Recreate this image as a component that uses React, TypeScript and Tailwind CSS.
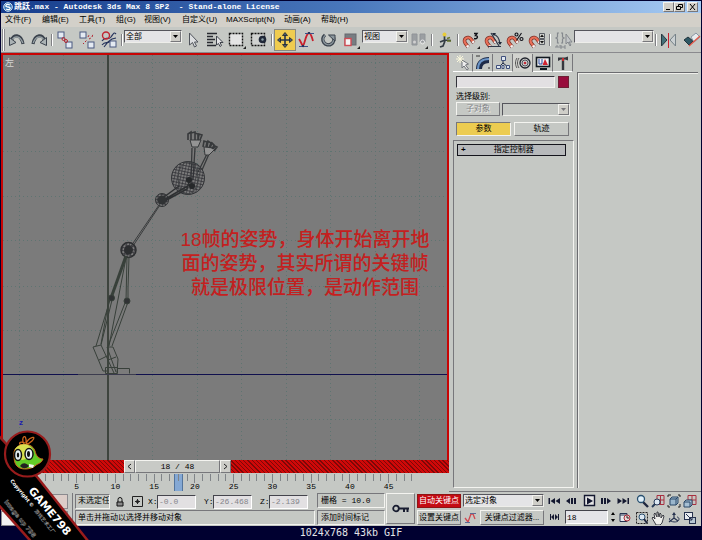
import { useState } from 'react';
import type { ReactNode } from 'react';
import clsx from 'clsx';

const RAISED = 'border border-t-[#f4f4f0] border-l-[#f4f4f0] border-b-[#77777b] border-r-[#77777b]';
const SUNKEN = 'border border-t-[#77777b] border-l-[#77777b] border-b-[#f4f4f0] border-r-[#f4f4f0]';

const MENUS = [
    { label: '文件(F)', width: 'w-[37px]' },
    { label: '编辑(E)', width: 'w-[37px]' },
    { label: '工具(T)', width: 'w-[37px]' },
    { label: '组(G)', width: 'w-[28px]' },
    { label: '视图(V)', width: 'w-[38px]' },
    { label: '自定义(U)', width: 'w-[44px]' },
    { label: 'MAXScript(N)', width: 'w-[58px]' },
    { label: '动画(A)', width: 'w-[37px]' },
    { label: '帮助(H)', width: 'w-[37px]' },
];

function Icon({ size = 22, children }: { size?: number; children: ReactNode }) {
    return (
        <svg width={size} height={size} viewBox={`0 0 ${size} ${size}`} fill="none" className="block shrink-0" aria-hidden="true">
            {children}
        </svg>
    );
}

function ToolButton({ label, active, children }: { label: string; active?: boolean; children: ReactNode }) {
    return (
        <button
            aria-label={label}
            className={clsx('flex h-[22px] w-[22px] shrink-0 items-center justify-center overflow-hidden', active && 'border border-[#8a8a80] bg-[#f0cc50]')}
        >
            <Icon>{children}</Icon>
        </button>
    );
}

function Separator() {
    return <span className="mx-px h-3 w-[2px] shrink-0 border-l border-[#808084] border-r border-r-white" />;
}

function Dropdown({ label, value, disabled, className }: { label: string; value: string; disabled?: boolean; className: string }) {
    return (
        <div className={clsx('relative shrink-0', className)}>
            <select
                aria-label={label}
                disabled={disabled}
                className={clsx(
                    'block h-[13px] w-full appearance-none border border-t-[#55555c] border-l-[#55555c] border-b-[#eeeeea] border-r-[#eeeeea] pl-px text-[8px] leading-[11px]',
                    disabled ? 'bg-[#c5c8c4]' : 'bg-[#e4e4e6] text-black',
                )}
            >
                <option>{value}</option>
            </select>
            <span className={clsx('pointer-events-none absolute top-px right-px flex h-[11px] w-[11px] items-center justify-center bg-[#cfcec8]', RAISED)}>
                <svg width="5" height="3" viewBox="0 0 5 3"><path d="M0 0h5L2.5 3z" fill={disabled ? '#77777b' : '#000'} /></svg>
            </span>
        </div>
    );
}

const Magnet = () => (
    <g transform="rotate(-38 8 12)">
        <path d="M4.500 17v-5a3.500 3.500 0 0 1 7 0v5" stroke="#7c3028" strokeWidth="3.600" />
        <path d="M4.500 16v-4a3.500 3.500 0 0 1 7 0v4" stroke="#ea7058" strokeWidth="2.200" />
        <path d="M3.200 16h2.600M10.200 16h2.600" stroke="#f4f4f4" strokeWidth="2" />
    </g>
);

const Sheet = ({ x, y }: { x: number; y: number }) => (
    <rect x={x} y={y} width="6" height="6" fill="#e4eaf2" stroke="#4a5880" />
);

function Toolbar() {
    return (
        <div className="flex h-[26px] items-center overflow-hidden border-b border-[#8a8a8e] bg-[#c5c8c4]">
            <span className="mx-px h-[22px] w-[3px] shrink-0 border-l border-r border-[#8c8c90] bg-white" />
            <ToolButton label="Undo">
                <path d="M5.500 11.500C7 5 15 4.500 17 15" stroke="#3a424c" strokeWidth="3.200" />
                <path d="M6 11.500C8 6.500 14 6 16.800 14" stroke="#9aa4a8" strokeWidth="1.400" />
                <path d="M3.500 8.500v8l6.500-3z" fill="#aab2b4" stroke="#3a424c" />
            </ToolButton>
            <ToolButton label="Redo">
                <path d="M5 15C7 4.500 15 5 16.500 11.500" stroke="#3a424c" strokeWidth="3.200" />
                <path d="M5.200 14C8 6 14 6.500 16 11.500" stroke="#9aa4a8" strokeWidth="1.400" />
                <path d="M18.500 8.500v8l-6.500-3z" fill="#aab2b4" stroke="#3a424c" />
            </ToolButton>
            <Separator />
            <ToolButton label="Link">
                <Sheet x={4} y={3} /><Sheet x={12} y={13} />
                <circle cx="9.500" cy="10" r="1.500" stroke="#b42430" /><circle cx="12" cy="12" r="1.500" stroke="#b42430" />
            </ToolButton>
            <ToolButton label="Unlink">
                <Sheet x={4} y={3} /><Sheet x={12} y={13} />
                <path d="M9 13l2-2M7 15l1-1M13 10l2-1M16 8l1-3M12 8l1-2" stroke="#b42430" strokeDasharray="2 1" />
            </ToolButton>
            <ToolButton label="Bind to space warp">
                <path d="M4 12c4-6 6 0 9-4s3-5 5-3M4 16c4-5 6 0 8-4M6 18l4-5 4-3 4-1" stroke="#26345c" strokeWidth="1.200" />
                <circle cx="8" cy="6.500" r="3.500" stroke="#c02430" strokeWidth="1.400" />
                <Sheet x={12} y={12} />
            </ToolButton>
            <Separator />
            <Dropdown label="Selection filter" value="全部" className="w-[58px] self-start mt-[3px]" />
            <ToolButton label="Select">
                <path d="M7.500 4v12l3-2.500 2 4.500 2-1-2-4h3.500z" fill="#dcdee0" stroke="#50545c" />
            </ToolButton>
            <ToolButton label="Select by name">
                <path d="M3 4.500h10M3 7.500h6M3 10.500h8M3 13.500h6M3 16.500h9" stroke="#282a30" strokeWidth="1.500" />
                <path d="M12.500 7v9l2-1.500 1.500 3 1.500-1-1.500-3h3z" fill="#e4e4e6" stroke="#40444c" />
            </ToolButton>
            <ToolButton label="Rectangular region">
                <rect x="3.500" y="4.500" width="13" height="12" fill="#e4e4e4" stroke="#111" strokeDasharray="2 1" strokeWidth="1.400" />
                <path d="M20 17v3h-3z" fill="#222" />
            </ToolButton>
            <ToolButton label="Window crossing">
                <rect x="3.500" y="4.500" width="13" height="12" fill="#d0d2d0" stroke="#111" strokeDasharray="2 1" strokeWidth="1.400" />
                <circle cx="14.500" cy="10.500" r="3.800" fill="#202838" />
                <circle cx="14.500" cy="10.500" r="1.200" fill="#8ba0a8" />
            </ToolButton>
            <Separator />
            <ToolButton label="Move" active>
                <path d="M11 5v12M5 11h12" stroke="#26344c" strokeWidth="1.600" />
                <path d="M11 3.500l2.500 3h-5zM11 18.500l2.500-3h-5zM3.500 11l3-2.500v5zM18.500 11l-3-2.500v5z" fill="#4a5a70" stroke="#1c2430" strokeWidth=".8" />
            </ToolButton>
            <ToolButton label="Curve editor">
                <path d="M3 10c2 3 3 6 4 7 2-3 3-13 6-13 2 0 3 5 4 8" stroke="#c8202c" strokeWidth="1.800" />
                <path d="M3 17.500h9M9 4.500h9" stroke="#3c5288" />
                <path d="M6 16h2v2H6zM12 3h2v2h-2z" fill="#26345c" />
            </ToolButton>
            <ToolButton label="Rotate">
                <path d="M7 6a5.500 5.500 0 1 0 8 1.500" stroke="#3a424c" strokeWidth="3.400" />
                <path d="M7 6.500a5.200 5.200 0 1 0 8 1.500" stroke="#8b969c" strokeWidth="1.400" />
                <path d="M10.500 6h6.500v6z" fill="#8b969c" stroke="#3a424c" />
            </ToolButton>
            <ToolButton label="Scale">
                <rect x="5" y="5" width="11" height="11" fill="#777d82" stroke="#66686e" />
                <rect x="5" y="9.500" width="6" height="7" fill="#f4f4f4" stroke="#d04c54" strokeWidth="1.400" />
                <path d="M20 17v3h-3z" fill="#222" />
            </ToolButton>
            <Dropdown label="Coordinate system" value="视图" className="w-[46px] self-start mt-[3px]" />
            <ToolButton label="Pivot centre">
                <path d="M4 5h5v11H4zM12 5h5v8h-5z" fill="#9b9fa2" stroke="#909498" />
                <circle cx="6.500" cy="13" r="1.500" fill="#d0d0d0" /><circle cx="14.500" cy="13" r="2" stroke="#e8e8e8" />
                <path d="M20 17v3h-3z" fill="#222" />
            </ToolButton>
            <Separator />
            <ToolButton label="Manipulate">
                <path d="M10.500 6v7M6 13l5-2 6 .5M11 12l-2 5-3 1" stroke="#333c44" strokeWidth="1.700" />
                <circle cx="10.500" cy="5.500" r="2" fill="#e8cc38" />
                <path d="M13 9.500l3-1M13 12h4" stroke="#65742c" strokeWidth="1.400" />
            </ToolButton>
            <Separator />
            <ToolButton label="Snap 3D">
                <Magnet />
                <path d="M14 4.500h3l-1.500 2c3 0 2.500 4-1.500 3" stroke="#101018" strokeWidth="1.400" />
                <path d="M20 17v3h-3z" fill="#222" />
            </ToolButton>
            <ToolButton label="Angle snap">
                <Magnet />
                <path d="M19 17.500H6M17 17L9 4M11 5c4 1 6.500 5 7 10" stroke="#303848" strokeWidth="1.200" />
                <path d="M10 4h4l-2 3zM16 13h4l-2 3z" fill="#202838" />
            </ToolButton>
            <ToolButton label="Percent snap">
                <Magnet />
                <circle cx="12.500" cy="5.500" r="1.500" stroke="#101018" strokeWidth="1.100" /><circle cx="17.500" cy="10" r="1.500" stroke="#101018" strokeWidth="1.100" /><path d="M17.500 4l-5 7.500" stroke="#101018" strokeWidth="1.100" />
            </ToolButton>
            <ToolButton label="Spinner snap">
                <Magnet />
                <path d="M13.500 4.500h5v5h-5zM13.500 10.500h5v5h-5z" fill="#d0d2ce" stroke="#5a5e64" />
                <path d="M16 5.500l2 2.500h-4zM16 14.500l2-2.500h-4z" fill="#111" />
            </ToolButton>
            <Separator />
            <ToolButton label="Named selection sets">
                <path d="M7 4H5.500v4L4 9l1.500 1v4H7M9 4h1.500v4l1.500 1-1.500 1v4H9" stroke="#85898e" strokeWidth="1.200" />
                <path d="M14 5v10l2-2 2 4 1-1-2-3h3z" fill="#c2c5c7" stroke="#85898e" />
                <path d="M4 19v-2h2v2M8 16v3h2v-2H8M14 17h-2v2h2" stroke="#85898e" />
            </ToolButton>
            <Dropdown label="Named selection" value="" className="w-[80px] self-start mt-[3px]" />
            <Separator />
            <ToolButton label="Mirror">
                <path d="M3.500 5v12l5.500-6z" fill="#447078" stroke="#283840" />
                <path d="M17.500 5v12L12 11z" fill="#cad0d2" stroke="#768288" />
                <path d="M10.500 4v15" stroke="#c82430" />
            </ToolButton>
            <ToolButton label="Align">
                <path d="M4 11l4-3 5 4-4 4z" fill="#2e5864" stroke="#20343c" />
                <path d="M11 8l5-4 4 4-6 5z" fill="#e8ebed" stroke="#8a96a4" />
                <path d="M9 17L20 7" stroke="#e05648" strokeWidth="1.300" />
            </ToolButton>
        </div>
    );
}

const GRID_X = [19, 63, 152, 197, 241, 286, 330, 375, 419];
const GRID_Y = [62, 107, 151, 196, 240, 286, 330, 419];

function Rig() {
    return (
        <svg className="absolute inset-0 h-full w-full" aria-hidden="true">
            <defs>
                <pattern id="mesh" width="3" height="3" patternUnits="userSpaceOnUse" patternTransform="rotate(12)">
                    <path d="M0 0h3M0 0v3" stroke="#2e2e34" strokeWidth="1.300" />
                </pattern>
            </defs>
            <g transform="translate(-3 -55)" fill="none">
                <g stroke="#5e7471" strokeDasharray="1 3">
                    {GRID_X.map(x => <path key={x} d={`M${x}.500 55v2000`} />)}
                    {GRID_Y.map(y => <path key={y} d={`M3 ${y}.500h2000`} />)}
                </g>
                <path d="M108 55v2000" stroke="#3e443e" strokeWidth="2" />
                <path d="M3 374.500h2000" stroke="#10104e" />
                <path d="M78 374.500h58" stroke="#3c3c4e" />

                {/* arms and hands */}
                <g stroke="#37393b">
                    <path d="M191 180l1-32M193 180l2-32M198 172l9-18M202 170l7-16" strokeWidth="1.300" />
                    <path d="M190 140l2 7h6l3-7zM204 147l1 8h4l7-7z" fill="#949494" />
                    <path d="M188 140v-6l3-2v8M191 140v-7l4-1v8M195 140v-7l3 1v6M198 140l1-6 3 1-2 5" strokeWidth="1.600" />
                    <path d="M203 147l1-6 3 1-1 5M207 147l1-6 3 2-2 5M210 148l2-5 2 2-2 4M213 149l2-3 2 1-3 4" strokeWidth="1.600" />
                </g>

                {/* head and spine */}
                <circle cx="188" cy="178" r="16.500" fill="url(#mesh)" stroke="#333538" />
                <ellipse cx="188" cy="178" rx="10" ry="16" stroke="#414345" />
                <path d="M190 179l-3 10-24 13M191 184l-29 17M179 186l-15 11" stroke="#2e3032" strokeWidth="1.500" />
                <circle cx="189" cy="180" r="3" fill="#26282a" /><circle cx="192" cy="186" r="3" fill="#26282a" />
                <circle cx="162" cy="200" r="6.500" fill="url(#mesh)" stroke="#303234" />
                <circle cx="162" cy="200" r="4.500" fill="#303234" />
                <path d="M159 205l-28 41M160 205l-27 41" stroke="#3a3c3d" />
                <circle cx="128.500" cy="250" r="7.500" fill="url(#mesh)" stroke="#2c2e30" strokeWidth="1.500" />
                <circle cx="128.500" cy="250" r="4.500" fill="#2c2e30" />

                {/* legs and feet */}
                <g stroke="#38403a">
                    <path d="M126 256l-15 42" strokeWidth="3" />
                    <path d="M127 256l-1 45M129 257l-1 31v12M126 258l-17 88M110 300l-14 46M112 300l-11 45M109 300l-8 44M125 303l-17 43M128 302l-16 44" />
                    <circle cx="111.500" cy="298" r="3" fill="#303234" /><circle cx="127" cy="301" r="3" fill="#303234" />
                    <path d="M93 347l8-2 13 28M93 347l10 24h4M99 360l8-4M107 347h6l5 12-1 14M107 347l9 25M108 360l8-3" />
                    <path d="M105.500 367.500h12v6h-12zM117.500 368.500h12v5" />
                </g>
            </g>
        </svg>
    );
}

function Viewport() {
    return (
        <div className="relative flex-1 overflow-hidden border-2 border-[#c80404] bg-[#7b7b7b] border-b-0">
            <Rig />
            <span className="absolute top-[3px] left-[2px] text-[9px] leading-[10px] text-[#d4d4d4]">左</span>
            <span className="absolute bottom-[32px] left-[16px] text-[8px] font-bold leading-[10px] text-[#1c1cb0]">z</span>
            <p className="absolute top-[173px] left-[174px] w-[256px] text-center text-[19px] font-medium leading-[24px] text-[#c42020]">
                18帧的姿势，身体开始离开地<br />面的姿势，其实所谓的关键帧<br />就是极限位置，是动作范围
            </p>
        </div>
    );
}

function TrackBar() {
    const frames = Array.from({ length: 49 }, (_, i) => i);
    return (
        <div>
            <div className="flex h-[13px] bg-[#be0c0c] bg-[repeating-linear-gradient(45deg,#7c0808_0_1px,#d00808_1px_3px)] pl-[123px]">
                <button aria-label="Previous frame" className={clsx('flex w-[11px] items-center justify-center bg-[#cdcdc8]', RAISED)}>
                    <svg width="5" height="7" viewBox="0 0 5 7"><path d="M4 1L1 3.500 4 6" fill="none" stroke="#222" /></svg>
                </button>
                <button className={clsx('w-[85px] bg-[#c8cac6] text-center font-[Liberation_Mono] text-[8px] leading-[11px]', RAISED)}>18 / 48</button>
                <button aria-label="Next frame" className={clsx('flex w-[11px] items-center justify-center bg-[#cdcdc8]', RAISED)}>
                    <svg width="5" height="7" viewBox="0 0 5 7"><path d="M1 1l3 2.500L1 6" fill="none" stroke="#222" /></svg>
                </button>
            </div>
            <div className="flex h-[19px] items-start pt-px pr-[33px] pl-[33px]">
                {frames.map(f => (
                    <div key={f} className={clsx('flex h-[17px] w-0 flex-1 flex-col items-center', f === 18 && 'border-x border-[#53749c] bg-[#84a8d4]')}>
                        <span className={clsx('w-px shrink-0 bg-[#808488]', f % 5 === 0 ? 'h-[9px]' : 'h-[7px]')} />
                        {f > 0 && f % 5 === 0 && <span className="font-[Liberation_Mono] text-[8px] leading-[8px]">{f}</span>}
                    </div>
                ))}
            </div>
        </div>
    );
}

const TABS = [
    { name: 'Create', icon: <><path d="M8 6v8l2-2 3 4 1.500-1-3-4 3-1z" fill="#eee" stroke="#70747a" /><path d="M6 1v8M2 5h8M3 2l6 6M9 2L3 8" stroke="#fbf8dc" /></> },
    { name: 'Modify', icon: <><path d="M5 15C5 9 9 6 15 6" stroke="#1d2b48" strokeWidth="6" /><path d="M4 15C4 8 8 5 15 5" stroke="#6c96c8" strokeWidth="2" /><path d="M2 2h4M14 14h2" stroke="#333" /></> },
    { name: 'Hierarchy', icon: <><path d="M9 6v4M9 9l-4 4M9 9l5 4" stroke="#222c48" /><path d="M7.500 2.500h4v4h-4zM2.500 11.500h4v3h-4zM12.500 11.500h3v3h-3zM8 11.500h2v3H8z" fill="#e0e8f0" stroke="#40507c" /></> },
    { name: 'Motion', icon: <><circle cx="11" cy="9" r="5" fill="#ccc" stroke="#20242c" strokeWidth="1.300" /><circle cx="11" cy="9" r="3" stroke="#50545c" /><circle cx="11" cy="9" r="1.300" fill="#c02c38" /><path d="M5 4C3 7 3 11 5 14M3 4C1 7 1 11 3 14" stroke="#555" /></> },
    { name: 'Display', icon: <><rect x="2.500" y="3.500" width="13" height="9" fill="#f0f2f4" stroke="#111820" strokeWidth="1.600" /><path d="M5 5v5h3V5" stroke="#2848a0" /><path d="M8.500 11l2.500-6 3 6z" fill="#d02430" /><path d="M6 15h7" stroke="#111820" strokeWidth="2" /></> },
    { name: 'Utilities', icon: <><path d="M4 7V3.500h7l3-1v4l-3-1H7z" fill="#36383e" /><path d="M9 5v11" stroke="#36383e" strokeWidth="2.400" /><path d="M9 4v3" stroke="#c82c30" strokeWidth="2" /></> },
];

function CommandPanel() {
    const [mode, setMode] = useState('参数');
    return (
        <aside className="flex w-[252px] shrink-0 flex-col border-b border-[#77777b] pb-[3px] pl-[4px]">
            <div className="flex h-[19px] items-end">
                {TABS.map(tab => (
                    <button
                        key={tab.name}
                        aria-label={tab.name}
                        className={clsx('flex h-[18px] w-[20px] items-center justify-center border-r border-[#77777b]', tab.name === 'Motion' ? 'bg-[#d2d3cf]' : 'border-b border-b-white')}
                    >
                        <Icon size={18}>{tab.icon}</Icon>
                    </button>
                ))}
            </div>
            <div className="flex flex-1">
                <div className="flex w-[121px] flex-col">
                    <div className="px-[3px]">
                        <div className="mt-[4px] flex gap-[3px]">
                            <input aria-label="Object name" className="h-[12px] w-[99px] border border-t-[#33333a] border-l-[#33333a] border-[#f2f2ee] bg-[#e2e0e2] text-[8px]" />
                            <button aria-label="Object colour" className="h-[12px] w-[11px] border border-[#6c2034] bg-[#980c3c]" />
                        </div>
                        <div className="mt-[4px] text-[8px] leading-[10px]">选择级别:</div>
                        <div className="flex items-center gap-[2px]">
                            <button disabled className={clsx('h-[14px] w-[44px] text-[8px] leading-[12px] text-[#85878a] [text-shadow:1px_1px_#eee]', RAISED)}>子对象</button>
                            <Dropdown label="选择级别" value="" disabled className="w-[68px]" />
                        </div>
                        <div className="mt-[6px] flex gap-[3px]">
                            {['参数', '轨迹'].map(m => (
                                <button
                                    key={m}
                                    onClick={() => setMode(m)}
                                    className={clsx('h-[14px] w-[55px] text-[8px] leading-[12px]', mode === m ? 'bg-[#eccc50]' : '', mode === m ? SUNKEN : RAISED)}
                                >
                                    {m}
                                </button>
                            ))}
                        </div>
                    </div>
                    <div className={clsx('mt-[4px] flex-1 px-[3px] pt-[3px]', SUNKEN)}>
                        <button className="flex h-[12px] w-[109px] items-center border border-[#14141c] bg-[#b7b9bb] px-[3px] text-[8px] leading-[10px]">
                            <span className="font-bold">+</span>
                            <span className="flex-1">指定控制器</span>
                        </button>
                    </div>
                </div>
                <div className="ml-[3px] mr-[3px] flex-1 border-t border-l border-[#6c6c70] shadow-[inset_1px_1px_#eeeeea]" />
            </div>
        </aside>
    );
}

function Coord({ axis, value }: { axis: string; value: string }) {
    return (
        <label className="flex items-center font-[Liberation_Mono] text-[8px] leading-[10px]">
            <span className="w-[9px]">{axis}:</span>
            <input defaultValue={value} className="h-[14px] w-[39px] border border-t-[#44444c] border-l-[#44444c] border-b-white border-r-white bg-[#e2e0e2] pl-px text-[#85858a]" />
        </label>
    );
}

const TRANSPORT = [
    { name: 'Go to start', d: 'M1.500 4H3v6H1.500zM8 4v6L3.500 7zM13 4v6L8.500 7z' },
    { name: 'Previous', d: 'M2 7l4-3v6zM7 4h2v6H7zM10 4h2v6h-2z' },
    { name: 'Play', d: 'M5 3.500v7L11 7z' },
    { name: 'Next', d: 'M12 7L8 4v6zM5 4h2v6H5zM2 4h2v6H2z' },
    { name: 'Go to end', d: 'M1.500 4v6L6 7zM6.500 4v6L11 7zM11.500 4H13v6h-1.500z' },
];

const NAV = [
    { name: 'Zoom', icon: <><path d="M8 8l5 5" stroke="#202840" strokeWidth="2.400" /><circle cx="6" cy="5" r="3.500" fill="#e0f0fa" stroke="#285070" strokeWidth="1.300" /></> },
    { name: 'Zoom all', icon: <><path d="M6 1.500h7v9H6zM6 6h7M9.500 1v10" stroke="#a83040" /><circle cx="6" cy="8" r="3" fill="#dce8f2" stroke="#263a58" /><path d="M4 10l-3 3" stroke="#263a58" strokeWidth="2" /></> },
    { name: 'Zoom extents', icon: <><path d="M1 3V1h3M11 1h2v2M1 11v2h2M13 10v3h-2" stroke="#222" /><path d="M3 5l2-2h6v6l-2 2H3zM3 5h6v6M9 5l2-2" fill="#9ab6cc" stroke="#2b4868" /></> },
    { name: 'Zoom extents all', icon: <><path d="M5 1.500h8v9H5zM5 6h8M9 1v10" stroke="#a83040" /><path d="M1 8l2-2h6v5l-2 2H1zM1 8h6v5" fill="#a6c0d4" stroke="#2b4868" /></> },
    { name: 'Zoom region', icon: <><rect x="1.500" y="1.500" width="11" height="11" stroke="#222" strokeDasharray="2 1" /><circle cx="7" cy="6" r="3" fill="#dce8f2" stroke="#285070" /><path d="M9 8l3 4" stroke="#202840" strokeWidth="2" /></> },
    { name: 'Pan', icon: <path d="M4 12L1 7l1-1 2 2-1-5 1-1 2 4V1h1l1 5 1-4 1 1v4l2-3 1 1-2 7-2 2H5z" fill="#f0f0ec" stroke="#2a2c34" strokeWidth=".9" /> },
    { name: 'Arc rotate', icon: <><path d="M7 3v4L2 11M7 7l4 3" stroke="#26324e" strokeWidth="1.200" /><path d="M3 7c-3 4 9 6 9 1 0-1-1-2-2-2" stroke="#26324e" /><path d="M5 4l2-3 2 3z" fill="#26324e" /></> },
    { name: 'Maximise viewport', icon: <><rect x="1.500" y="1.500" width="8" height="7" fill="#e8ecf0" stroke="#26324e" /><rect x="6.500" y="6.500" width="6" height="6" fill="#b8c8d4" stroke="#26324e" /><path d="M3 3l6 6M9 6v3H6" stroke="#26324e" /></> },
];

function StatusBar() {
    return (
        <div className="flex h-[34px] overflow-hidden bg-[#c5c8c4] pt-px text-[8px] leading-[12px]">
            <div className="flex w-[67px] shrink-0 flex-col gap-[2px] pt-px">
                <div className="h-[15px] border border-[#8a8a8e] bg-[#dccdc8]" />
                <div className="h-[15px] border border-[#8a8a8e] bg-[#f2f2f2]" />
            </div>
            <div className="ml-[4px] flex min-w-0 flex-1 flex-col border-l border-[#77777b] pl-[2px]">
                <div className="flex h-[17px] items-center">
                    <span className={clsx('h-[15px] w-[35px] shrink-0 overflow-hidden pl-[2px] whitespace-nowrap', SUNKEN)}>未选定任</span>
                    <button aria-label="Lock selection" className="ml-[3px] flex w-[14px] justify-center">
                        <svg width="8" height="10" viewBox="0 0 8 10"><path d="M2 5V2.500a2 2 0 0 1 4 0V5" fill="none" stroke="#111" /><path d="M1 5h6v4H1z" fill="#888" stroke="#111" /></svg>
                    </button>
                    <button aria-label="Absolute mode" className="mr-[5px] ml-[5px]">
                        <svg width="11" height="11" viewBox="0 0 11 11"><path d="M.5.5h10v10H.5z" fill="none" stroke="#222" /><circle cx="5.500" cy="5.500" r="1.500" /><path d="M5.500 3v5M3 5.500h5" stroke="#222" /></svg>
                    </button>
                    <div className="flex gap-[8px]">
                        <Coord axis="X" value="-0.0" />
                        <Coord axis="Y" value="-26.468" />
                        <Coord axis="Z" value="-2.139" />
                    </div>
                </div>
                <div className={clsx('h-[15px] pl-[2px] leading-[13px]', SUNKEN)}>单击并拖动以选择并移动对象</div>
            </div>
            <div className="ml-[2px] flex w-[68px] shrink-0 flex-col gap-[2px]">
                <span className={clsx('h-[15px] pl-[3px] font-[Liberation_Mono,Noto_Sans_CJK_SC] leading-[13px] whitespace-nowrap', SUNKEN)}>栅格 = 10.0</span>
                <span className={clsx('h-[15px] pl-[3px] leading-[13px] whitespace-nowrap', SUNKEN)}>添加时间标记</span>
            </div>
            <button aria-label="Set keys" className={clsx('ml-px flex h-[31px] w-[29px] shrink-0 items-center justify-center', RAISED)}>
                <svg width="18" height="9" viewBox="0 0 18 9" fill="none"><circle cx="4" cy="4.500" r="2.800" stroke="#181c30" strokeWidth="1.800" /><path d="M7 4.500h10M12 5v3M15.500 5v3" stroke="#181c30" strokeWidth="2" /></svg>
            </button>
            <div className="ml-[2px] flex w-[44px] shrink-0 flex-col gap-[2px] pt-px">
                <button className="h-[14px] border border-[#901414] bg-[#c40c14] whitespace-nowrap text-white">自动关键点</button>
                <button className={clsx('h-[15px] whitespace-nowrap', RAISED)}>设置关键点</button>
            </div>
            <div className="ml-[2px] flex w-[82px] shrink-0 flex-col gap-[3px] pt-px">
                <Dropdown label="Key target" value="选定对象" className="w-[81px]" />
                <div className="flex items-center gap-[2px]">
                    <button aria-label="Tangent type" className="w-[15px]">
                        <svg width="15" height="14" viewBox="0 0 15 14" fill="none"><path d="M2 7l3 4 3-8h2l2 5" stroke="#d04850" strokeWidth="1.300" /><path d="M2 11.500h5M7 2.500h6" stroke="#5a6a94" /></svg>
                    </button>
                    <button className={clsx('h-[15px] w-[64px] whitespace-nowrap', RAISED)}>关键点过滤器...</button>
                </div>
            </div>
            <div className="ml-[2px] flex w-[84px] shrink-0 flex-col">
                <div className="flex h-[16px] items-center justify-between">
                    {TRANSPORT.map(t => (
                        <button key={t.name} aria-label={t.name}>
                            <svg width="15" height="14" viewBox="0 0 15 14">
                                {t.name === 'Play' && <path d="M2.500 1.500h10v10h-10z" fill="#e6e6e6" stroke="#141830" strokeWidth="1.400" />}
                                <path d={t.d} fill="#141830" />
                            </svg>
                        </button>
                    ))}
                </div>
                <div className="flex h-[16px] items-center">
                    <button aria-label="Key mode">
                        <svg width="15" height="14" viewBox="0 0 15 14"><path d="M3 4h1v6H3zM7 4v6L4 7zM8 4v6l3-3zM11 4h1v6h-1z" fill="#141830" /></svg>
                    </button>
                    <input aria-label="Current frame" defaultValue="18" className="ml-[3px] h-[14px] w-[43px] border border-t-[#44444c] border-l-[#44444c] border-b-white border-r-white bg-[#e4e4e8] pl-px font-[Liberation_Mono]" />
                    <svg className="ml-[2px]" width="6" height="12" viewBox="0 0 6 12"><path d="M3 1l2 3H1zM3 11l2-3H1z" /></svg>
                    <button aria-label="Time configuration" className="ml-[3px]">
                        <svg width="12" height="12" viewBox="0 0 12 12" fill="none"><path d="M1 2.500h7v8H1zM1 4h7" fill="#e8ecf0" stroke="#26324e" /><circle cx="8" cy="7" r="3" fill="#eed8d8" stroke="#a82c38" /><path d="M8 5v2h2" stroke="#222" /></svg>
                    </button>
                </div>
            </div>
            <div className="mr-[3px] ml-[3px] grid w-[64px] shrink-0 grid-cols-4 grid-rows-2 place-items-center">
                {NAV.map(n => (
                    <button key={n.name} aria-label={n.name}>
                        <Icon size={14}>{n.icon}</Icon>
                    </button>
                ))}
            </div>
        </div>
    );
}

function Watermark() {
    return (
        <svg className="pointer-events-none absolute bottom-0 left-0" width="92" height="112" viewBox="0 0 92 112">
            <path d="M-4 5L38 50L92 118H35L-4 74z" fill="#000" stroke="#981c1c" strokeWidth="2.500" />
            <circle cx="27.500" cy="26" r="22.500" fill="#000" stroke="#981c1c" strokeWidth="2.200" />
            <path d="M24 18c-6-1-6-6 1-3M24 16c-4-7 3-12 2-1M26 16c2-7 12-9 6-3-2 2-4 3-6 3" fill="none" stroke="#d0661c" strokeWidth="1.300" />
            <path d="M14 25c0-9 17-13 21-2 1 5 4 8 8 8-2 5-5 4-8 7-5 4-15 4-18 0-3-3-3-8-3-13z" fill="#62cc28" stroke="#d0661c" />
            <path d="M15 21c4-6 14-7 18 1l-3 8-8 2-6-2z" fill="#d8e050" />
            <ellipse cx="18" cy="27" rx="3.500" ry="5.500" fill="#e4f0f4" stroke="#111" strokeWidth="1.500" />
            <ellipse cx="29" cy="26" rx="4" ry="5.500" fill="#e4f0f4" stroke="#111" strokeWidth="1.500" />
            <ellipse cx="18" cy="27" rx="1.200" ry="2.500" fill="#111" /><ellipse cx="28.500" cy="26" rx="1.500" ry="3" fill="#111" />
            <path d="M20 38c3-4 6-3 9 0-3 3-6 3-9 0z" fill="#222" />
            <path d="M29 36l5 1-1 3-4-1z" fill="#f4f4f4" />
            <g fontFamily="DejaVu Sans, sans-serif" fontWeight="bold">
                <text transform="translate(28 63) rotate(50)" fontSize="11" fill="#fff">GAME798</text>
                <text transform="translate(10 53) rotate(51)" fontSize="5" fill="#fff">Copyright ©</text>
                <text transform="translate(34 83) rotate(51)" fontSize="5" fill="#8c8c8c" fontFamily="Noto Sans CJK SC, sans-serif">游戏艺术工厂</text>
                <text transform="translate(4 74) rotate(51)" fontSize="6" fill="#000" stroke="#888" strokeWidth=".5">Image up 798</text>
            </g>
        </svg>
    );
}

export default function App() {
    return (
        <div className="relative flex min-h-screen flex-col overflow-hidden bg-[#000030] px-px pt-px font-[Liberation_Sans,Noto_Sans_CJK_SC,sans-serif] text-black">
            <header className="flex h-[12px] items-center bg-linear-to-r from-[#163c8c] via-[#4a78bc] to-[#a8ccf4] pr-[3px] pl-[2px]">
                <svg width="10" height="10" viewBox="0 0 10 10" fill="none"><circle cx="5" cy="5" r="4.300" fill="#3a78b8" stroke="#d8e8f4" /><path d="M7 3C3 1 1 5 5 5s2 4-2 2" stroke="#fff" strokeWidth="1.300" /></svg>
                <h1 className="ml-px flex-1 font-[Liberation_Mono,Noto_Sans_CJK_SC] text-[8px] font-bold leading-[12px] whitespace-pre text-white">跳跃.max - Autodesk 3ds Max 8 SP2  - Stand-alone License</h1>
                {['M2 6.500h4', 'M3.500 3V1.500h4v3H6M1.500 3.500h4v3h-4z', 'M2 1l5 6M7 1L2 7'].map((d, i) => (
                    <button key={d} aria-label={['Minimise', 'Restore', 'Close'][i]} className={clsx('flex h-[10px] w-[11px] items-center justify-center bg-[#d2cfc8]', RAISED, i === 2 && 'ml-[2px]')}>
                        <svg width="9" height="8" viewBox="0 0 9 8"><path d={d} fill="none" stroke="#000" /></svg>
                    </button>
                ))}
            </header>
            <nav className="flex h-[14px] bg-[#d3d0c9] pl-[4px]">
                {MENUS.map(m => (
                    <button key={m.label} className={clsx('text-left text-[8px] leading-[14px] whitespace-nowrap', m.width)}>{m.label}</button>
                ))}
            </nav>
            <Toolbar />
            <main className="flex flex-1 bg-[#c5c8c4]">
                <div className="flex min-w-0 flex-1 flex-col">
                    <Viewport />
                    <TrackBar />
                </div>
                <CommandPanel />
            </main>
            <StatusBar />
            <footer className="h-[14px] text-center font-[DejaVu_Sans_Mono] text-[10px] leading-[14px] text-[#e4e4e8]">1024x768 43kb GIF</footer>
            <Watermark />
        </div>
    );
}
